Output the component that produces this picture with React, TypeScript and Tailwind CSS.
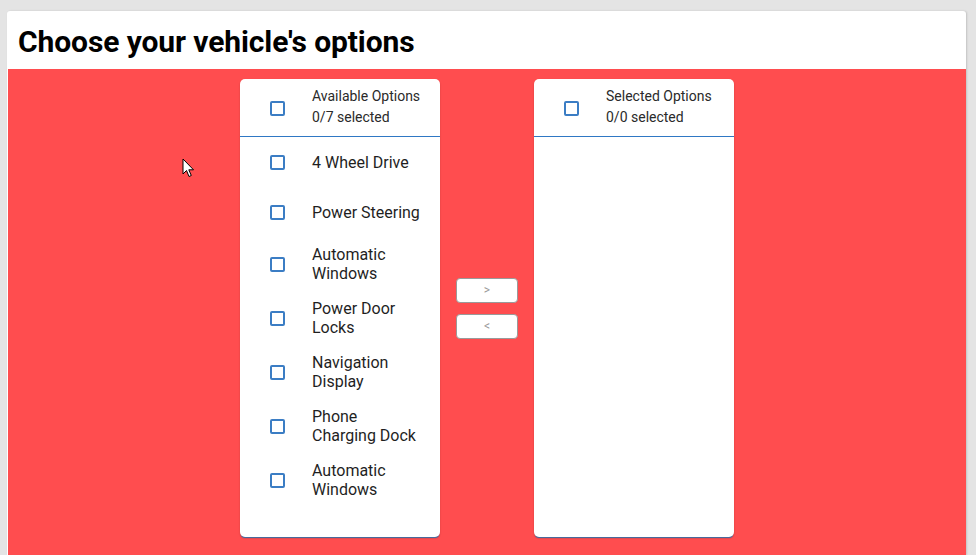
const available = [
  "4 Wheel Drive",
  "Power Steering",
  "Automatic Windows",
  "Power Door Locks",
  "Navigation Display",
  "Phone Charging Dock",
  "Automatic Windows",
];

function Box() {
  return (
    <span className="block w-[15px] h-[15px] border-2 border-[#3b7dc4] rounded-[2px] bg-white" />
  );
}

function Panel({ title, count, items }: { title: string; count: string; items: string[] }) {
  return (
    <div className="w-[200px] h-[458px] bg-white rounded-[5px] shadow-[0_2px_1px_-1px_#3a6ea5,0_1px_2px_0_rgba(0,0,0,0.2)] flex flex-col overflow-hidden">
      <div className="flex items-center border-b border-[#2f78c4] h-[58px]">
        <div className="w-[72px] shrink-0 flex justify-center pl-[2px] pt-[1px]">
          <Box />
        </div>
        <div className="text-[14px] leading-[21px] text-[#2a2a2a] pb-[1px]">
          <div>{title}</div>
          <div>{count}</div>
        </div>
      </div>
      <ul className="flex flex-col">
        {items.map((item, i) => (
          <li key={i} className="flex items-center min-h-[50px] py-2">
            <div className="w-[72px] shrink-0 flex justify-center pl-[2px]">
              <Box />
            </div>
            <span className="text-[16px] leading-[19px] text-[#1f1f1f] pr-4">{item}</span>
          </li>
        ))}
      </ul>
    </div>
  );
}

export default function App() {
  return (
    <div className="min-h-screen bg-[#e4e4e4] pt-[11px] pl-[7px] pr-[10px] font-['Roboto',sans-serif]">
      <div className="bg-white rounded-t-[3px] shadow-[1px_0_2px_rgba(0,0,0,0.15)] relative">
        <h1 className="h-[58px] flex items-center pl-[11px] pt-[3px] text-[30px] font-bold text-black tracking-[-0.1px]">
          Choose your vehicle's options
        </h1>
        <div className="bg-[#ff4d4f] h-[486px] ml-[1px] flex justify-center items-start pt-[10px] gap-4">
          <Panel title="Available Options" count="0/7 selected" items={available} />
          <div className="flex flex-col gap-[11px] self-center mb-[18px]">
            <button className="w-[62px] h-[25px] bg-white border border-[#9a9a9a] rounded-[4px] text-[12px] text-[#9a9a9a] leading-none">
              &gt;
            </button>
            <button className="w-[62px] h-[25px] bg-white border border-[#9a9a9a] rounded-[4px] text-[12px] text-[#9a9a9a] leading-none">
              &lt;
            </button>
          </div>
          <Panel title="Selected Options" count="0/0 selected" items={[]} />
        </div>
        <svg
          className="absolute left-[175px] top-[147px]"
          width="13"
          height="20"
          viewBox="0 0 13 20"
        >
          <path d="M1 1 L1 16 L4.5 12.5 L7 18.5 L9.3 17.5 L6.8 11.8 L11.5 11.8 Z" fill="white" stroke="black" strokeWidth="1" />
        </svg>
      </div>
    </div>
  );
}
